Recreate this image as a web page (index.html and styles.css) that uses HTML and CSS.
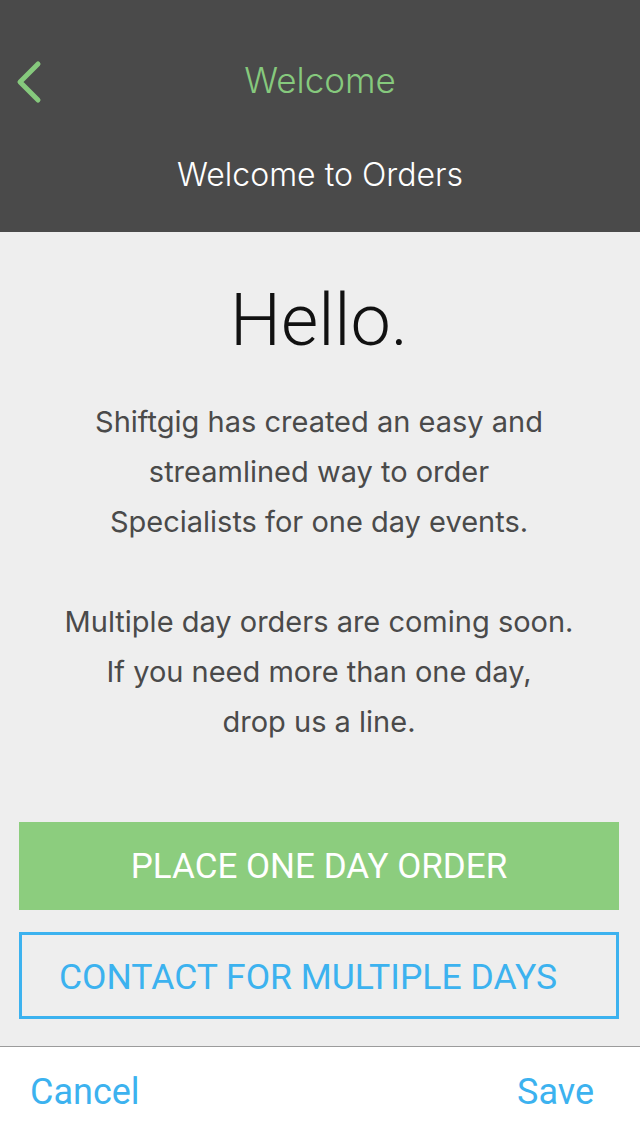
FILE: index.html
```html
<!DOCTYPE html>
<html>
<head>
<meta charset="utf-8">
<link rel="stylesheet" href="styles.css">
</head>
<body>
<div class="screen">
  <header class="topbar">
    <div class="navrow">
      <button class="back" aria-label="Back">
        <svg width="30" height="44" viewBox="0 0 30 44"><polyline points="24,4 6,22 24,40" fill="none" stroke="#86c97d" stroke-width="5" stroke-linecap="round" stroke-linejoin="round"/></svg>
      </button>
      <div class="navtitle">Welcome</div>
    </div>
    <div class="subtitle">Welcome to Orders</div>
  </header>
  <main class="content">
    <h1 class="hello">Hello.</h1>
    <p class="copy">Shiftgig has created an easy and<br>streamlined way to order<br>Specialists for one day events.</p>
    <p class="copy">Multiple day orders are coming soon.<br>If you need more than one day,<br>drop us a line.</p>
    <div class="actions">
      <button class="btn btn-primary">PLACE ONE DAY ORDER</button>
      <button class="btn btn-outline">CONTACT FOR MULTIPLE DAYS</button>
    </div>
  </main>
  <footer class="footbar">
    <span class="link">Cancel</span>
    <span class="link">Save</span>
  </footer>
</div>
</body>
</html>
```
FILE: styles.css
```css
* { box-sizing: border-box; }
html, body { margin: 0; padding: 0; }
body { font-family: "Inter", "Liberation Sans", sans-serif; background: #eeeeee; }
.screen { width: 640px; height: 1136px; display: flex; flex-direction: column; }
.topbar { background: #4a4a4a; height: 232px; display: flex; flex-direction: column; }
.navrow { position: relative; height: 80px; margin-top: 40px; display: flex; align-items: center; justify-content: center; }
.back { position: absolute; left: 14px; top: 20px; background: none; border: 0; padding: 0; margin: 0; width: 30px; height: 44px; }
.back svg { display: block; }
.navtitle { color: #86c97d; font-size: 35px; font-weight: 300; line-height: 40px; }
.subtitle { color: #ffffff; font-size: 32px; font-weight: 300; text-align: center; line-height: 40px; margin-top: 35px; }
.content { flex: 1; background: #eeeeee; display: flex; flex-direction: column; align-items: center; padding: 0 21px 0 19px; }
.hello { font-family: "Roboto", "Liberation Sans", sans-serif; font-size: 72px; font-weight: 300; color: #111; margin: 53px 0 0; line-height: 1; }
.copy { font-size: 29px; line-height: 50px; color: #4a4a4a; text-align: center; margin: 40px 0 0; font-weight: 400; }
.copy + .copy { margin-top: 50px; }
.actions { width: 100%; display: flex; flex-direction: column; gap: 22px; margin-top: 75px; }
.btn { font-family: "Roboto", "Liberation Sans", sans-serif; font-size: 35px; width: 100%; border: 0; cursor: pointer; }
.btn-primary { background: #8ccd7e; color: #fff; height: 88px; }
.btn-outline { background: transparent; border: 3px solid #3cb2ef; color: #3cb2ef; height: 87px; text-align: left; padding-left: 37px; font-size: 35.5px; padding-top: 4px; }
.footbar { background: #fff; border-top: 1px solid #9b9b9b; height: 90px; display: flex; justify-content: space-between; align-items: center; padding: 0 46px 0 30px; }
.link { color: #3cb2ef; font-size: 36px; font-family: "Roboto", "Liberation Sans", sans-serif; }
```
